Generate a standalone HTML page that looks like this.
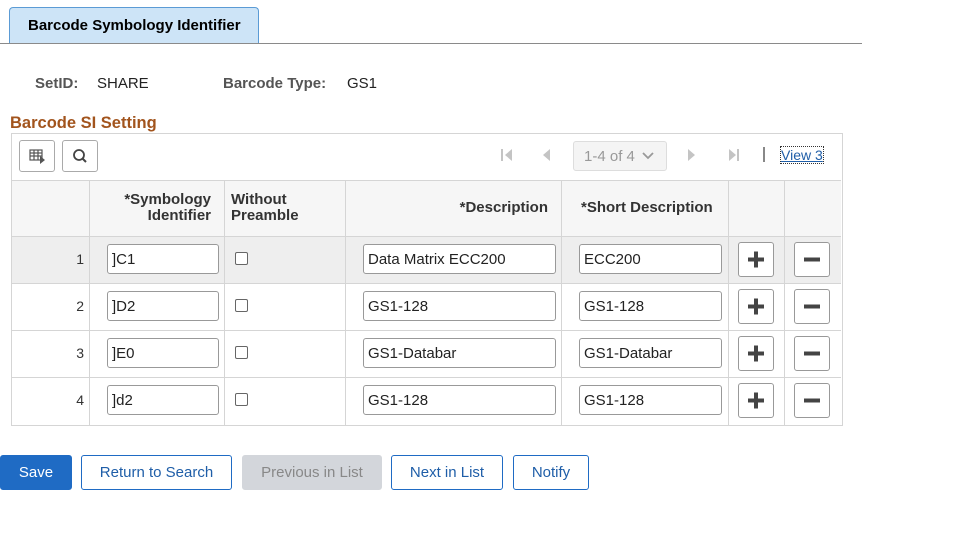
<!DOCTYPE html>
<html><head><meta charset="utf-8"><style>
*{box-sizing:border-box;margin:0;padding:0}
body{width:960px;height:540px;background:#fff;font-family:"Liberation Sans",Arial,sans-serif;position:relative;overflow:hidden;color:#333}
.a{position:absolute}
.tab{left:9px;top:7px;width:250px;height:37px;background:#cde4f7;border:1px solid #5b9bd5;border-bottom:none;border-radius:4px 4px 0 0;font-weight:bold;font-size:15px;color:#000;padding:9px 0 0 18px}
.line{left:0;top:43px;width:862px;height:1px;background:#8a8a8a}
.lbl{font-size:15px;font-weight:bold;color:#555}
.val{font-size:15px;color:#222}
.sect{left:10px;top:114px;font-size:16.5px;font-weight:bold;color:#a2541d}
.grid{left:11px;top:133px;width:832px;height:293px;border:1px solid #d5d5d5}
.tb{width:36px;height:32px;border:1px solid #aaa;border-radius:3px;background:#fff}
.hdr{left:12px;top:180px;width:829px;height:56px;background:#f6f6f6;border-top:1px solid #d5d5d5}
.vl{width:1px;background:#d5d5d5;top:180px;height:245px}
.hl{height:1px;background:#d5d5d5;left:12px;width:829px}
.h{font-size:15px;font-weight:bold;color:#333;line-height:16px}
.inp{height:30px;border:1px solid #999;border-radius:3px;background:#fff;font-size:15px;padding:6px 0 0 4px;color:#222}
.cb{width:13px;height:13px;border:1px solid #666;border-radius:2px;background:#fff}
.pm{width:36px;height:35px;border:1px solid #999;border-radius:3px;background:#fff}
.num{font-size:14px;width:70px;text-align:right}
.btn{top:455px;height:35px;border:1px solid #1f6bc4;border-radius:3px;font-size:15px;color:#1f5ea8;text-align:center;line-height:33px;background:#fff}
</style></head><body>
<div class="a tab">Barcode Symbology Identifier</div>
<div class="a line"></div>
<div class="a lbl" style="left:35px;top:75px">SetID:</div>
<div class="a val" style="left:97px;top:75px">SHARE</div>
<div class="a lbl" style="left:223px;top:75px">Barcode Type:</div>
<div class="a val" style="left:347px;top:75px">GS1</div>
<div class="a sect">Barcode SI Setting</div>
<div class="a grid"></div>
<div class="a tb" style="left:19px;top:140px"><svg width="34" height="30"><g fill="none" stroke="#555" stroke-width="1.2"><rect x="10" y="9" width="12" height="10"/><line x1="10" y1="12" x2="22" y2="12"/><line x1="10" y1="15" x2="22" y2="15"/><line x1="14" y1="9" x2="14" y2="19"/><line x1="18" y1="9" x2="18" y2="19"/></g><path d="M20 15 L25 19 L20 23Z" fill="#555"/></svg></div>
<div class="a tb" style="left:62px;top:140px"><svg width="34" height="30"><circle cx="16" cy="14" r="5" fill="none" stroke="#444" stroke-width="1.8"/><line x1="19.5" y1="17.5" x2="23" y2="21" stroke="#444" stroke-width="2"/></svg></div>
<svg class="a" style="left:498px;top:147px" width="260" height="18"><g fill="#c4c4c4"><rect x="3" y="2" width="2" height="12"/><path d="M14 2 L7 8 L14 14Z"/><path d="M52 2 L45 8 L52 14Z"/><path d="M190 2 L197 8 L190 14Z"/><path d="M231 2 L238 8 L231 14Z"/><rect x="239" y="2" width="2" height="12"/></g></svg>
<div class="a" style="left:573px;top:141px;width:94px;height:30px;border:1px solid #ddd;border-radius:3px;background:#f4f4f4;font-size:15px;color:#999;padding:6px 0 0 10px">1-4 of 4 <svg width="14" height="10" style="margin-left:2px"><path d="M2 2 L7 7 L12 2" fill="none" stroke="#999" stroke-width="1.8"/></svg></div>
<div class="a" style="left:763px;top:147px;width:2px;height:15px;background:#888"></div>
<div class="a" style="left:781px;top:147px;font-size:14px;color:#1f5ea8;text-decoration:underline;outline:1px dotted #333">View 3</div>
<div class="a hdr"></div>
<div class="a" style="left:12px;top:237px;width:829px;height:46px;background:#eeeeee"></div>
<div class="a vl" style="left:89px"></div><div class="a vl" style="left:224px"></div><div class="a vl" style="left:345px"></div><div class="a vl" style="left:561px"></div><div class="a vl" style="left:728px"></div><div class="a vl" style="left:784px"></div>
<div class="a hl" style="top:236px"></div><div class="a hl" style="top:283px"></div><div class="a hl" style="top:330px"></div><div class="a hl" style="top:377px"></div>
<div class="a h" style="left:90px;top:192px;width:121px;text-align:right">*Symbology<br>Identifier</div>
<div class="a h" style="left:231px;top:192px">Without<br>Preamble</div>
<div class="a h" style="left:346px;top:200px;width:202px;text-align:right">*Description</div>
<div class="a h" style="left:581px;top:200px">*Short Description</div>

<div class="a num" style="left:14px;top:251px">1</div>
<div class="a inp" style="left:107px;top:244px;width:112px">]C1</div>
<div class="a cb" style="left:235px;top:252px"></div>
<div class="a inp" style="left:363px;top:244px;width:193px">Data Matrix ECC200</div>
<div class="a inp" style="left:579px;top:244px;width:143px">ECC200</div>

<div class="a num" style="left:14px;top:298px">2</div>
<div class="a inp" style="left:107px;top:291px;width:112px">]D2</div>
<div class="a cb" style="left:235px;top:299px"></div>
<div class="a inp" style="left:363px;top:291px;width:193px">GS1-128</div>
<div class="a inp" style="left:579px;top:291px;width:143px">GS1-128</div>

<div class="a num" style="left:14px;top:345px">3</div>
<div class="a inp" style="left:107px;top:338px;width:112px">]E0</div>
<div class="a cb" style="left:235px;top:346px"></div>
<div class="a inp" style="left:363px;top:338px;width:193px">GS1-Databar</div>
<div class="a inp" style="left:579px;top:338px;width:143px">GS1-Databar</div>

<div class="a num" style="left:14px;top:392px">4</div>
<div class="a inp" style="left:107px;top:385px;width:112px">]d2</div>
<div class="a cb" style="left:235px;top:393px"></div>
<div class="a inp" style="left:363px;top:385px;width:193px">GS1-128</div>
<div class="a inp" style="left:579px;top:385px;width:143px">GS1-128</div>

<div class="a pm" style="left:738px;top:242px"><svg width="34" height="33"><rect x="9" y="14.5" width="16" height="4" fill="#444"/><rect x="15" y="8.5" width="4" height="16" fill="#444"/></svg></div>
<div class="a pm" style="left:794px;top:242px"><svg width="34" height="33"><rect x="9" y="14.5" width="16" height="4" fill="#444"/></svg></div>
<div class="a pm" style="left:738px;top:289px"><svg width="34" height="33"><rect x="9" y="14.5" width="16" height="4" fill="#444"/><rect x="15" y="8.5" width="4" height="16" fill="#444"/></svg></div>
<div class="a pm" style="left:794px;top:289px"><svg width="34" height="33"><rect x="9" y="14.5" width="16" height="4" fill="#444"/></svg></div>
<div class="a pm" style="left:738px;top:336px"><svg width="34" height="33"><rect x="9" y="14.5" width="16" height="4" fill="#444"/><rect x="15" y="8.5" width="4" height="16" fill="#444"/></svg></div>
<div class="a pm" style="left:794px;top:336px"><svg width="34" height="33"><rect x="9" y="14.5" width="16" height="4" fill="#444"/></svg></div>
<div class="a pm" style="left:738px;top:383px"><svg width="34" height="33"><rect x="9" y="14.5" width="16" height="4" fill="#444"/><rect x="15" y="8.5" width="4" height="16" fill="#444"/></svg></div>
<div class="a pm" style="left:794px;top:383px"><svg width="34" height="33"><rect x="9" y="14.5" width="16" height="4" fill="#444"/></svg></div>

<div class="a btn" style="left:0;width:72px;background:#1f6bc4;color:#fff">Save</div>
<div class="a btn" style="left:81px;width:151px">Return to Search</div>
<div class="a btn" style="left:242px;width:140px;background:#d3d6db;border-color:#d3d6db;color:#888">Previous in List</div>
<div class="a btn" style="left:391px;width:112px">Next in List</div>
<div class="a btn" style="left:513px;width:76px">Notify</div>
</body></html>
